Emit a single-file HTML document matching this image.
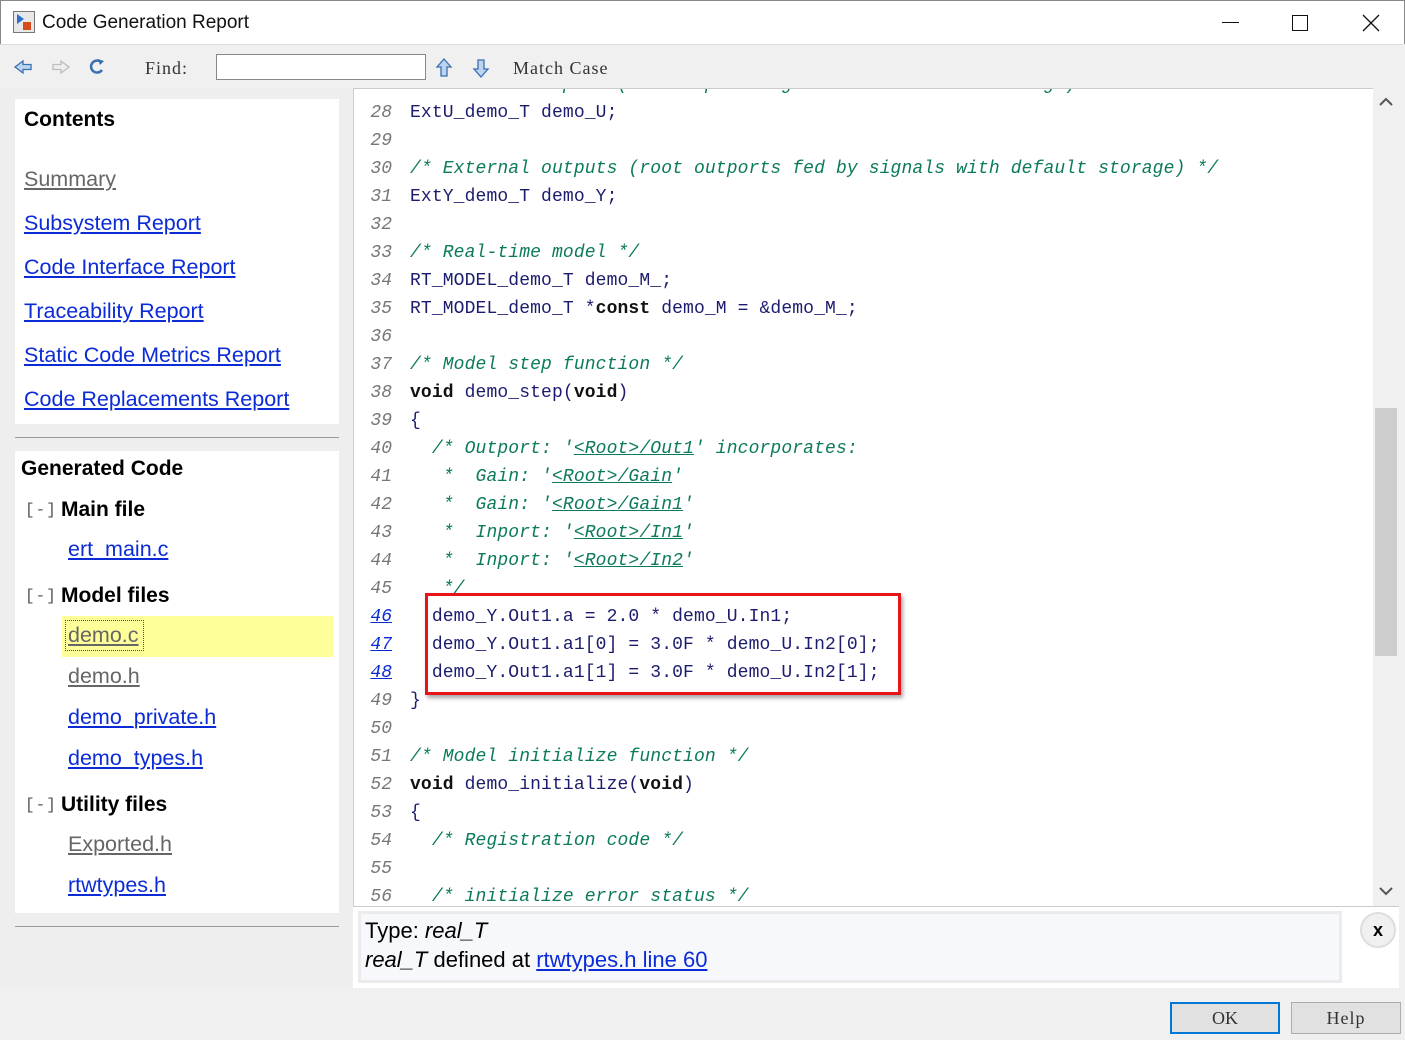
<!DOCTYPE html><html><head><meta charset="utf-8"><style>
*{margin:0;padding:0;box-sizing:border-box}
body{width:1405px;height:1040px;overflow:hidden;background:#f0f0f0;font-family:"Liberation Sans",sans-serif;position:relative}
.abs{position:absolute}
#title{left:0;top:0;width:1405px;height:44px;background:#fff;border:1px solid #888;border-bottom:none}
#tb{left:0;top:44px;width:1403px;height:44px;background:#f0f0f0;border-top:1px solid #ddd}
.mono{font-family:"Liberation Mono",monospace}
#left{left:0;top:88px;width:352px;height:900px;background:#eeeeee}
.box{background:#fff;position:absolute;left:15px;width:324px}
a,.lk{color:#0b2bd6;text-decoration:underline}
.lk{position:absolute;font-size:21.5px;white-space:nowrap}
.gr{color:#666}
.h{position:absolute;font-weight:bold;font-size:21px;color:#000;white-space:nowrap}
.br{position:absolute;font-family:"Liberation Mono",monospace;font-size:16px;color:#555;letter-spacing:1px}
#code{left:353px;top:88px;width:1020px;height:818px;background:#fff;overflow:hidden;border-left:1px solid #ccc;border-top:1px solid #ccc}
.ln{position:absolute;left:0;width:38px;text-align:right;color:#777;font-style:italic;font-family:"Liberation Mono",monospace;font-size:18px;line-height:28px;margin-top:2px}
.ln.a{color:#0b2bd6;text-decoration:underline}
.cl{position:absolute;left:56px;white-space:pre;color:#1c1c6e;font-family:"Liberation Mono",monospace;font-size:18px;line-height:28px;letter-spacing:0.12px;margin-top:2px}
.c{color:#0c7a5c;font-style:italic}
.c u{color:#0c7a5c}
b{font-weight:bold;color:#111}
</style></head><body>
<div id="title" class="abs">
 <svg class="abs" style="left:12px;top:10px" width="22" height="22"><rect x="0.5" y="0.5" width="21" height="21" fill="#e8e8e8" stroke="#777"/><path d="M4 3 L11 8 L4 13Z" fill="#2b6fd0"/><rect x="10" y="11" width="8" height="8" fill="#d84b1c"/></svg>
 <div class="abs" style="left:41px;top:11px;font-size:19px;color:#111">Code Generation Report</div>
 <div class="abs" style="left:1221px;top:21px;width:17px;height:1px;background:#111"></div>
 <div class="abs" style="left:1291px;top:14px;width:16px;height:16px;border:1px solid #111"></div>
 <svg class="abs" style="left:1361px;top:13px" width="18" height="18"><path d="M1 1L17 17M17 1L1 17" stroke="#111" stroke-width="1.3"/></svg>
</div>
<div id="tb" class="abs">
 <svg class="abs" style="left:12px;top:13px" width="22" height="18"><path d="M3 9 L11 3 V6.5 H19 V11.5 H11 V15Z" fill="#bcd4f0" stroke="#3a6fb0" stroke-width="1.3"/></svg>
 <svg class="abs" style="left:50px;top:13px" width="22" height="18"><path d="M19 9 L11 3 V6.5 H3 V11.5 H11 V15Z" fill="#eee" stroke="#bbb" stroke-width="1.3"/></svg>
 <svg class="abs" style="left:87px;top:12px" width="20" height="20"><path d="M14 5 A6 6 0 1 0 15 13" fill="none" stroke="#3a6fb0" stroke-width="2.5"/><path d="M11 2 L17 4 L13 8Z" fill="#3a6fb0"/></svg>
 <div class="abs mono" style="left:145px;top:13px;font-size:18px;color:#333;font-family:'Liberation Serif',serif;letter-spacing:1px">Find:</div>
 <div class="abs" style="left:216px;top:9px;width:210px;height:26px;background:#fff;border:1px solid #888"></div>
 <svg class="abs" style="left:435px;top:12px" width="18" height="22"><path d="M9 2 L16 10 H12 V19 H6 V10 H2Z" fill="#bcd4f0" stroke="#3a6fb0" stroke-width="1.3"/></svg>
 <svg class="abs" style="left:472px;top:12px" width="18" height="22"><path d="M9 20 L16 12 H12 V3 H6 V12 H2Z" fill="#bcd4f0" stroke="#3a6fb0" stroke-width="1.3"/></svg>
 <div class="abs" style="left:513px;top:13px;font-size:18px;color:#333;font-family:'Liberation Serif',serif;letter-spacing:1px">Match Case</div>
</div>
<div id="left" class="abs">
 <div class="box" style="top:11px;height:325px">
  <div class="h" style="left:9px;top:9px">Contents</div>
  <div class="lk gr" style="left:9px;top:68px">Summary</div>
  <div class="lk" style="left:9px;top:112px">Subsystem Report</div>
  <div class="lk" style="left:9px;top:156px">Code Interface Report</div>
  <div class="lk" style="left:9px;top:200px">Traceability Report</div>
  <div class="lk" style="left:9px;top:244px">Static Code Metrics Report</div>
  <div class="lk" style="left:9px;top:288px">Code Replacements Report</div>
 </div>
 <div class="abs" style="left:15px;top:349px;width:324px;height:1px;background:#999"></div>
 <div class="box" style="top:363px;height:462px">
  <div class="h" style="left:6px;top:6px">Generated Code</div>
  <div class="br" style="left:10px;top:50px">[-]</div><div class="h" style="left:46px;top:47px">Main file</div>
  <div class="lk" style="left:53px;top:86px">ert_main.c</div>
  <div class="br" style="left:10px;top:136px">[-]</div><div class="h" style="left:46px;top:133px">Model files</div>
  <div class="abs" style="left:47px;top:165px;width:271px;height:41px;background:#ffff99"></div>
  <div class="abs" style="left:50px;top:169px;width:79px;height:31px;border:1px dotted #2255aa"></div>
  <div class="lk gr" style="left:53px;top:172px">demo.c</div>
  <div class="lk gr" style="left:53px;top:213px">demo.h</div>
  <div class="lk" style="left:53px;top:254px">demo_private.h</div>
  <div class="lk" style="left:53px;top:295px">demo_types.h</div>
  <div class="br" style="left:10px;top:345px">[-]</div><div class="h" style="left:46px;top:342px">Utility files</div>
  <div class="lk gr" style="left:53px;top:381px">Exported.h</div>
  <div class="lk" style="left:53px;top:422px">rtwtypes.h</div>
 </div>
 <div class="abs" style="left:15px;top:838px;width:324px;height:1px;background:#999"></div>
</div>
<div id="code" class="abs">
<div class="cl" style="top:-20px"><span class="c">/* External inputs (root inport signals with default storage) */</span></div>
<div class="ln" style="top:8px">28</div><div class="cl" style="top:8px">ExtU_demo_T demo_U;</div>
<div class="ln" style="top:36px">29</div>
<div class="ln" style="top:64px">30</div><div class="cl" style="top:64px"><span class="c">/* External outputs (root outports fed by signals with default storage) */</span></div>
<div class="ln" style="top:92px">31</div><div class="cl" style="top:92px">ExtY_demo_T demo_Y;</div>
<div class="ln" style="top:120px">32</div>
<div class="ln" style="top:148px">33</div><div class="cl" style="top:148px"><span class="c">/* Real-time model */</span></div>
<div class="ln" style="top:176px">34</div><div class="cl" style="top:176px">RT_MODEL_demo_T demo_M_;</div>
<div class="ln" style="top:204px">35</div><div class="cl" style="top:204px">RT_MODEL_demo_T *<b>const</b> demo_M = &amp;demo_M_;</div>
<div class="ln" style="top:232px">36</div>
<div class="ln" style="top:260px">37</div><div class="cl" style="top:260px"><span class="c">/* Model step function */</span></div>
<div class="ln" style="top:288px">38</div><div class="cl" style="top:288px"><b>void</b> demo_step(<b>void</b>)</div>
<div class="ln" style="top:316px">39</div><div class="cl" style="top:316px">{</div>
<div class="ln" style="top:344px">40</div><div class="cl" style="top:344px"><span class="c">  /* Outport: '<u>&lt;Root&gt;/Out1</u>' incorporates:</span></div>
<div class="ln" style="top:372px">41</div><div class="cl" style="top:372px"><span class="c">   *  Gain: '<u>&lt;Root&gt;/Gain</u>'</span></div>
<div class="ln" style="top:400px">42</div><div class="cl" style="top:400px"><span class="c">   *  Gain: '<u>&lt;Root&gt;/Gain1</u>'</span></div>
<div class="ln" style="top:428px">43</div><div class="cl" style="top:428px"><span class="c">   *  Inport: '<u>&lt;Root&gt;/In1</u>'</span></div>
<div class="ln" style="top:456px">44</div><div class="cl" style="top:456px"><span class="c">   *  Inport: '<u>&lt;Root&gt;/In2</u>'</span></div>
<div class="ln" style="top:484px">45</div><div class="cl" style="top:484px"><span class="c">   */</span></div>
<div class="ln a" style="top:512px">46</div><div class="cl" style="top:512px">  demo_Y.Out1.a = 2.0 * demo_U.In1;</div>
<div class="ln a" style="top:540px">47</div><div class="cl" style="top:540px">  demo_Y.Out1.a1[0] = 3.0F * demo_U.In2[0];</div>
<div class="ln a" style="top:568px">48</div><div class="cl" style="top:568px">  demo_Y.Out1.a1[1] = 3.0F * demo_U.In2[1];</div>
<div class="ln" style="top:596px">49</div><div class="cl" style="top:596px">}</div>
<div class="ln" style="top:624px">50</div>
<div class="ln" style="top:652px">51</div><div class="cl" style="top:652px"><span class="c">/* Model initialize function */</span></div>
<div class="ln" style="top:680px">52</div><div class="cl" style="top:680px"><b>void</b> demo_initialize(<b>void</b>)</div>
<div class="ln" style="top:708px">53</div><div class="cl" style="top:708px">{</div>
<div class="ln" style="top:736px">54</div><div class="cl" style="top:736px"><span class="c">  /* Registration code */</span></div>
<div class="ln" style="top:764px">55</div>
<div class="ln" style="top:792px">56</div><div class="cl" style="top:792px"><span class="c">  /* initialize error status */</span></div>
<div class="abs" style="left:71px;top:504px;width:476px;height:102px;border:3px solid #e8141c;box-shadow:2px 3px 4px rgba(0,0,0,.35)"></div>
</div>
<div class="abs" style="left:1373px;top:88px;width:26px;height:818px;background:#f0f0f0"></div>
<div class="abs" style="left:1375px;top:408px;width:22px;height:248px;background:#cdcdcd"></div>
<svg class="abs" style="left:1379px;top:97px" width="14" height="10"><path d="M1 8 L7 2 L13 8" fill="none" stroke="#555" stroke-width="2"/></svg>
<svg class="abs" style="left:1379px;top:886px" width="14" height="10"><path d="M1 2 L7 8 L13 2" fill="none" stroke="#555" stroke-width="2"/></svg>
<div class="abs" style="left:353px;top:906px;width:1046px;height:82px;background:#fff;border-top:1px solid #ccc"></div>
<div class="abs" style="left:358px;top:911px;width:984px;height:72px;background:#f7f8fc;border:3px solid #ebebeb"></div>
<div class="abs" style="left:365px;top:916px;font-size:22px;color:#000;line-height:29px;white-space:nowrap">Type: <i>real_T</i><br><i>real_T</i> defined at <a>rtwtypes.h line 60</a></div>
<div class="abs" style="left:1360px;top:912px;width:36px;height:36px;border-radius:50%;background:#f0f0f0;border:2px solid #ddd;text-align:center;line-height:32px;font-weight:bold;font-size:18px">x</div>
<div class="abs" style="left:1170px;top:1002px;width:110px;height:32px;background:#e1e1e1;border:2px solid #0078d7;text-align:center;line-height:28px;font-family:'Liberation Serif',serif;font-size:18px;color:#333">OK</div>
<div class="abs" style="left:1291px;top:1002px;width:110px;height:32px;background:#e1e1e1;border:1px solid #adadad;text-align:center;line-height:30px;font-family:'Liberation Serif',serif;font-size:18px;color:#333;letter-spacing:1px">Help</div>
</body></html>
